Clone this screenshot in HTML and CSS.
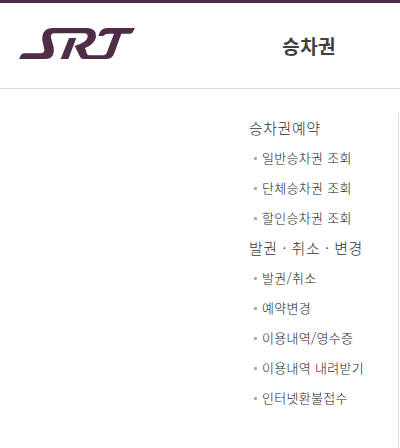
FILE: index.html
```html
<!DOCTYPE html>
<html lang="ko">
<head>
<meta charset="utf-8">
<title>SRT 승차권</title>
<link rel="stylesheet" href="styles.css">
</head>
<body>
<header class="header">
  <a class="logo">
    <svg viewBox="57 84 348 93" width="116" height="31" role="img" aria-label="SRT">
      <path d="M57 177L63 165Q66 160 72 160H121Q135 159 133 148L127 122Q124 84 160 84H262Q290 85 288 111Q285 132 255 144L261 161Q263 166 269 166H309Q317 166 320 159L342 101H326Q315 101 310 108H296Q300 84 322 84H405L398 97Q396 101 391 101H364L343 159Q337 177 318 177H250Q243 177 240 170L224 138Q260 127 263 111Q264 100 253 100H163Q151 100 153 113L161 142Q165 177 137 177Z"/>
      <path d="M207 114H229L205 177H182Z"/>
    </svg>
  </a>
  <h1 class="title">승차권</h1>
</header>
<main class="menu">
  <nav class="column">
    <h2 class="heading">승차권예약</h2>
    <ul class="list">
      <li>일반승차권 조회</li>
      <li>단체승차권 조회</li>
      <li>할인승차권 조회</li>
    </ul>
    <h2 class="heading wide">발권 · 취소 · 변경</h2>
    <ul class="list">
      <li>발권/취소</li>
      <li>예약변경</li>
      <li>이용내역/영수증</li>
      <li>이용내역 내려받기</li>
      <li>인터넷환불접수</li>
    </ul>
  </nav>
</main>
</body>
</html>
```
FILE: styles.css
```css
* { box-sizing: border-box; margin: 0; padding: 0; }
body {
  height: 448px;
  overflow: hidden;
  background: #fff;
  font-family: "Noto Sans CJK KR", sans-serif;
}
.header {
  display: flex;
  justify-content: space-between;
  height: 89px;
  padding: 25px 64px 0 19px;
  border-top: 3px solid #4f2d48;
  border-bottom: 1px solid #dcdcec;
}
.logo svg { display: block; fill: #4f2d48; }
.title {
  height: 36px;
  font-size: 19px;
  line-height: 36px;
  font-weight: 700;
  letter-spacing: 0.4px;
  color: #404040;
}
.menu {
  display: flex;
  justify-content: flex-end;
  height: 359px;
  padding: 24px 1px 0 0;
}
.column {
  width: 150px;
  border-right: 1px solid #dce0ea;
}
.heading {
  height: 30px;
  font-size: 15px;
  font-weight: 300;
  line-height: 29px;
  letter-spacing: 0.5px;
  white-space: nowrap;
  color: #333;
}
.wide { letter-spacing: 0.57px; }
.list { list-style: none; }
.list li {
  display: flex;
  align-items: center;
  height: 30px;
  padding-left: 5px;
  font-size: 13px;
  font-weight: 300;
  line-height: 28px;
  letter-spacing: 0.3px;
  white-space: nowrap;
  color: #222;
}
.list li::before {
  content: "";
  width: 3px;
  height: 3px;
  margin-right: 5px;
  border-radius: 1px;
  background: #aaa;
}
```
